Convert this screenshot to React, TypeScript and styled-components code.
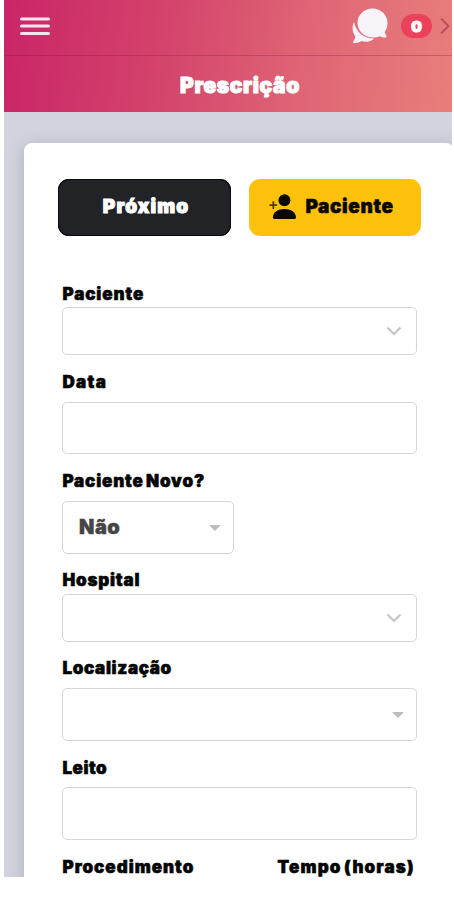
import React from "react";
import styled, { createGlobalStyle } from "styled-components";

const GlobalStyle = createGlobalStyle`
  *, *::before, *::after { box-sizing: border-box; }
  body { margin: 0; background: #fff; font-family: Inter, "Open Sans", sans-serif; font-weight: 900; color: #050505; }
  button { font: inherit; border: 0; cursor: pointer; }
`;

const Screen = styled.div`
  width: 448px;
  height: 877px;
  margin-left: 4px;
  overflow: hidden;
  background: #d1d4df;
`;

const Header = styled.header`
  height: 112px;
  background: linear-gradient(97deg, #c92567 0%, #d3426b 34%, #df6475 66%, #e87e7b 100%);
`;

const TopBar = styled.div`
  height: 56px;
  display: flex;
  align-items: center;
  padding: 0 2px 4px 16px;
  border-bottom: 1px solid rgba(130, 20, 60, 0.3);
`;

const MenuButton = styled.button`
  display: flex;
  padding: 0;
  margin-right: auto;
  background: none;
`;

const Badge = styled.span`
  display: flex;
  align-items: center;
  justify-content: center;
  width: 31px;
  height: 24px;
  margin: 1px 8px 0 13px;
  border-radius: 12px;
  background: #e9425a;
  color: #fff;
  font-size: 15px;
  -webkit-text-stroke: 1px #fff;
`;

const Title = styled.h1`
  height: 56px;
  margin: 0;
  padding: 2px 0 0 24px;
  display: flex;
  align-items: center;
  justify-content: center;
  color: #fff;
  font-size: 21px;
  font-weight: 900;
  letter-spacing: 0.6px;
  -webkit-text-stroke: 1px #fff;
`;

const Card = styled.main`
  width: 430px;
  height: 760px;
  margin: 31px 0 0 20px;
  padding: 36px 33px 0 34px;
  border-radius: 8px;
  background: #fff;
  box-shadow: 0 3px 16px rgba(80, 85, 105, 0.28);
`;

const Actions = styled.div`
  display: flex;
  gap: 18px;
  margin-bottom: 45px;
`;

const ActionButton = styled.button<{ $primary?: boolean }>`
  flex: none;
  width: ${(p) => (p.$primary ? 173 : 172)}px;
  height: 57px;
  display: flex;
  align-items: center;
  justify-content: center;
  gap: 9px;
  padding: ${(p) => (p.$primary ? "0 0 3px 3px" : "0 7px 3px 0")};
  border-radius: 11px;
  background: ${(p) => (p.$primary ? "#212327" : "#fec20c")};
  box-shadow: ${(p) => (p.$primary ? "inset 0 0 0 1px #08090a" : "none")};
  color: ${(p) => (p.$primary ? "#fff" : "#080700")};
  font-size: 19px;
  letter-spacing: ${(p) => (p.$primary ? 1.1 : 0.6)}px;
  -webkit-text-stroke: ${(p) => (p.$primary ? "1px #fff" : "0.5px #080700")};
`;

const Form = styled.form`
  display: flex;
  flex-direction: column;
  padding-left: 4px;
`;

const Field = styled.div<{ $after: number }>`
  margin-bottom: ${(p) => p.$after}px;
`;

const Label = styled.label<{ $tracking?: number }>`
  display: block;
  height: 24px;
  line-height: 26px;
  padding-left: 0.5px;
  font-size: 17px;
  white-space: nowrap;
  letter-spacing: ${(p) => p.$tracking ?? 0}px;
  word-spacing: -2px;
  -webkit-text-stroke: 0.6px #050505;
`;

const Control = styled.div<{ $gap: number; $height: number; $narrow?: boolean; $inset: number }>`
  display: flex;
  align-items: center;
  justify-content: flex-end;
  width: ${(p) => (p.$narrow ? 172 : 355)}px;
  height: ${(p) => p.$height}px;
  margin-top: ${(p) => p.$gap}px;
  padding: 0 ${(p) => p.$inset}px 0 16px;
  border: 1px solid #d6d6d6;
  border-radius: 5px;
`;

const Value = styled.span`
  margin-right: auto;
  padding-bottom: 2px;
  color: #454545;
  font-size: 20px;
  letter-spacing: 0.5px;
  -webkit-text-stroke: 0.4px #454545;
`;

const Columns = styled.div`
  display: grid;
  grid-template-columns: 215px 1fr;
`;

const MenuIcon = () => (
  <svg width="30" height="20" viewBox="0 0 30 20" fill="none" stroke="#fbe4ee" strokeWidth="3" strokeLinecap="round">
    <path d="M1.500 3h27M1.500 10h27M1.500 17.500h27" />
  </svg>
);

const ChatIcon = () => (
  <svg width="36" height="36" viewBox="0 0 36 36" fill="#f6f4f8">
    <path d="M2 14C-.5 19 .5 25 3.400 28.500C3.400 31 1 33 1 34.200C1 36 8 34.500 9.500 33C14 34.800 19 33.300 22.300 30.400C13 30.500 4.500 25.500 2 14Z" />
    <path d="M20.500.5C29 .5 35.500 7 35.500 15C35.500 18.500 34.500 21.500 32.700 24C33 26 35 27.500 34.500 29C33.700 30 29.500 29.500 28 28.200C18 32.500 5.500 26 5.500 15C5.500 7 12 .5 20.500.5Z" />
  </svg>
);

const NextIcon = () => (
  <svg width="10" height="18" viewBox="0 0 10 18" fill="none" stroke="#b34f5c" strokeWidth="1.800">
    <path d="M1 1.500L8.500 9L1 16.500" />
  </svg>
);

const AddPersonIcon = () => (
  <svg width="27" height="27" viewBox="0 0 28 28" fill="#080700">
    <circle cx="16" cy="7.500" r="6.200" />
    <path d="M4 25.500C4 19.500 9.500 16.500 16 16.500S28 19.500 28 25.500C28 26.300 27.400 27 26.500 27H5.500C4.600 27 4 26.300 4 25.500Z" />
    <path d="M4.500 8.500v8M.5 12.500h8" stroke="#4c3d08" strokeWidth="1.800" />
  </svg>
);

const Chevron = () => (
  <svg width="16" height="10" viewBox="0 0 16 10" fill="none" stroke="#c4c4c4" strokeWidth="2.200">
    <path d="M1.500 1.500L8 8L14.500 1.500" />
  </svg>
);

const Caret = () => (
  <svg width="12" height="6" viewBox="0 0 12 6" fill="#bdbdbd">
    <path d="M0 0h12L6 6Z" />
  </svg>
);

export default function App() {
  return (
    <>
      <GlobalStyle />
      <Screen>
        <Header>
          <TopBar>
            <MenuButton type="button" aria-label="Menu"><MenuIcon /></MenuButton>
            <ChatIcon />
            <Badge>0</Badge>
            <NextIcon />
          </TopBar>
          <Title>Prescrição</Title>
        </Header>
        <Card>
          <Actions>
            <ActionButton $primary type="button">Próximo</ActionButton>
            <ActionButton type="button"><AddPersonIcon />Paciente</ActionButton>
          </Actions>
          <Form>
            <Field $after={14}>
              <Label $tracking={0.9}>Paciente</Label>
              <Control $gap={2} $height={48} $inset={14}><Chevron /></Control>
            </Field>
            <Field $after={14}>
              <Label $tracking={1.3}>Data</Label>
              <Control $gap={9} $height={52} $inset={12} />
            </Field>
            <Field $after={13}>
              <Label $tracking={0.85}>Paciente Novo?</Label>
              <Control $gap={9} $height={53} $inset={12} $narrow><Value>Não</Value><Caret /></Control>
            </Field>
            <Field $after={13}>
              <Label $tracking={0.8}>Hospital</Label>
              <Control $gap={3} $height={48} $inset={14}><Chevron /></Control>
            </Field>
            <Field $after={14}>
              <Label $tracking={0.65}>Localização</Label>
              <Control $gap={9} $height={53} $inset={12}><Caret /></Control>
            </Field>
            <Field $after={14}>
              <Label $tracking={0.5}>Leito</Label>
              <Control $gap={8} $height={53} $inset={12} />
            </Field>
            <Columns>
              <Label $tracking={1}>Procedimento</Label>
              <Label $tracking={1.15}>Tempo (horas)</Label>
            </Columns>
          </Form>
        </Card>
      </Screen>
    </>
  );
}
